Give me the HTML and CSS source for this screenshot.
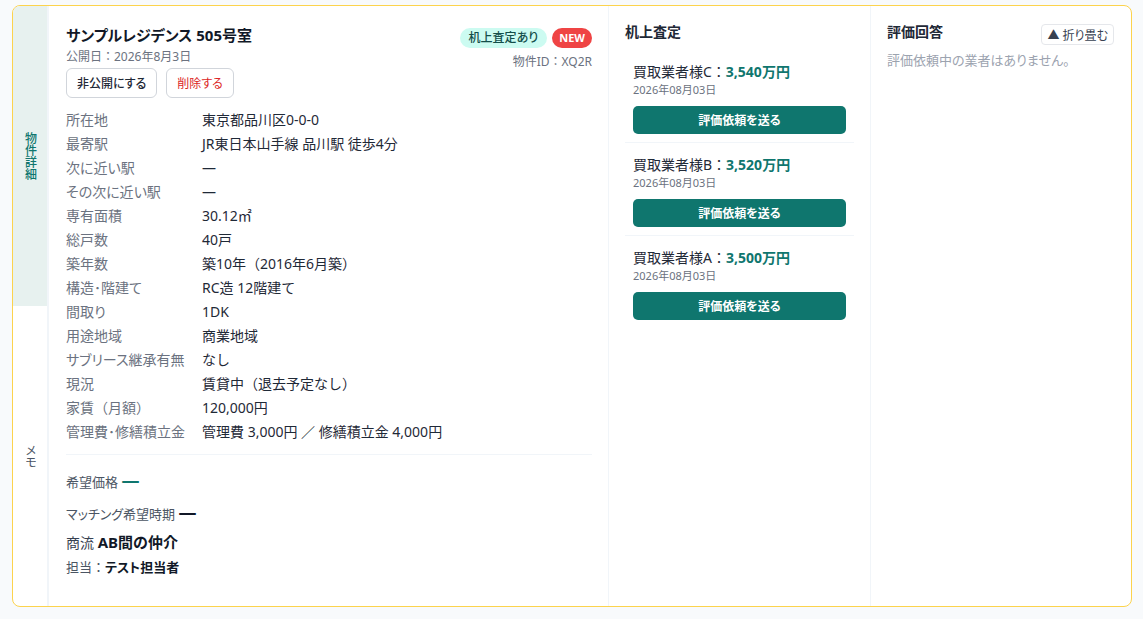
FILE: index.html
```html
<!DOCTYPE html>
<html lang="ja">
<head>
  <meta charset="UTF-8" />
  <meta name="viewport" content="width=device-width, initial-scale=1.0"/>
  <title>物件詳細</title>
  <link rel="stylesheet" href="styles.css">
</head>
<body>
  <div class="card">
    <div class="tabs">
      <div class="tab active">物件詳細</div>
      <div class="tab">メモ</div>
    </div>

    <div class="main">
      <div class="head">
        <div>
          <h1 class="title">サンプルレジデンス 505号室</h1>
          <div class="published">公開日：2026年8月3日</div>
          <div class="actions">
            <button class="btn">非公開にする</button>
            <button class="btn danger">削除する</button>
          </div>
        </div>
        <div class="head-right">
          <div class="badges">
            <span class="badge desk">机上査定あり</span>
            <span class="badge new">NEW</span>
          </div>
          <div class="prop-id">物件ID：XQ2R</div>
        </div>
      </div>

      <dl class="spec">
        <dt>所在地</dt><dd>東京都品川区0-0-0</dd>
        <dt>最寄駅</dt><dd>JR東日本山手線 品川駅 徒歩4分</dd>
        <dt>次に近い駅</dt><dd>—</dd>
        <dt>その次に近い駅</dt><dd>—</dd>
        <dt>専有面積</dt><dd>30.12㎡</dd>
        <dt>総戸数</dt><dd>40戸</dd>
        <dt>築年数</dt><dd>築10年（2016年6月築）</dd>
        <dt>構造･階建て</dt><dd>RC造 12階建て</dd>
        <dt>間取り</dt><dd>1DK</dd>
        <dt>用途地域</dt><dd>商業地域</dd>
        <dt>サブリース継承有無</dt><dd>なし</dd>
        <dt>現況</dt><dd>賃貸中（退去予定なし）</dd>
        <dt class="full">家賃（月額）</dt><dd>120,000円</dd>
        <dt>管理費･修繕積立金</dt><dd>管理費 3,000円 ／ 修繕積立金 4,000円</dd>
      </dl>

      <div class="extra">
        <div class="wish">希望価格 <span class="dash teal">—</span></div>
        <div class="wish">マッチング希望時期 <span class="dash">—</span></div>
        <div class="flow">商流 <strong>AB間の仲介</strong></div>
        <div class="owner">担当：<strong>テスト担当者</strong></div>
      </div>
    </div>

    <div class="col">
      <h2 class="col-title">机上査定</h2>
      <ul class="offers">
        <li>
          <div class="offer-name">買取業者様C：<span class="price">3,540万円</span></div>
          <div class="offer-date">2026年08月03日</div>
          <button class="send">評価依頼を送る</button>
        </li>
        <li>
          <div class="offer-name">買取業者様B：<span class="price">3,520万円</span></div>
          <div class="offer-date">2026年08月03日</div>
          <button class="send">評価依頼を送る</button>
        </li>
        <li>
          <div class="offer-name">買取業者様A：<span class="price">3,500万円</span></div>
          <div class="offer-date">2026年08月03日</div>
          <button class="send">評価依頼を送る</button>
        </li>
      </ul>
    </div>

    <div class="col last">
      <div class="col-head">
        <h2 class="col-title">評価回答</h2>
        <button class="fold">▲ 折り畳む</button>
      </div>
      <p class="empty">評価依頼中の業者はありません。</p>
    </div>
  </div>
</body>
</html>
```

FILE: styles.css
```css
* {
  box-sizing: border-box;
}
body {
  margin: 0;
  padding: 5px 11px 12px 12px;
  background: #f8fafc;
  font-family: "Noto Sans", "Noto Sans CJK JP", sans-serif;
  color: #1f2937;
}
button {
  font-family: inherit;
  cursor: pointer;
}
/* proportional kana, only where no full-width colon/paren is shown */
.title,
.btn,
.badge,
.spec dt,
.wish,
.owner strong,
.fold,
.send,
.empty {
  font-feature-settings: "palt";
}
.spec dt.full {
  font-feature-settings: normal;
}
.card {
  display: flex;
  width: 1120px;
  height: 602px;
  background: #fff;
  border: 1px solid #fcd34d;
  border-radius: 8px;
  overflow: hidden;
}

.tabs {
  display: flex;
  flex-direction: column;
  width: 36px;
  flex-shrink: 0;
  border-right: 2px solid #f1f5f9;
}
.tab {
  flex: 1;
  display: flex;
  align-items: center;
  justify-content: center;
  writing-mode: vertical-rl;
  font-size: 12px;
  color: #4b5563;
}
.tab.active {
  background: #e7f1ef;
  color: #0f766e;
  font-weight: 500;
}

.main {
  width: 560px;
  flex-shrink: 0;
  padding: 18px 16px 0 17px;
  border-right: 1px solid #f1f5f9;
}
.head {
  display: flex;
  justify-content: space-between;
}
.title {
  margin: 0;
  font-size: 15px;
  font-weight: 700;
  line-height: 22px;
  color: #111827;
}
.published {
  font-size: 12px;
  color: #6b7280;
  line-height: 16px;
  margin-top: 3px;
}
.actions {
  display: flex;
  gap: 9px;
  margin-top: 3px;
}
.btn {
  height: 30px;
  padding: 0 10px;
  font-size: 12px;
  font-weight: 500;
  background: #fff;
  border: 1px solid #d1d5db;
  border-radius: 6px;
  color: #1f2937;
}
.btn.danger {
  color: #dc2626;
  font-weight: 400;
}
.head-right {
  display: flex;
  flex-direction: column;
  align-items: flex-end;
  padding-top: 4px;
}
.badges {
  display: flex;
  gap: 5px;
}
.badge {
  height: 20px;
  line-height: 20px;
  padding: 0 9px;
  border-radius: 10px;
  font-size: 12px;
  font-weight: 500;
}
.badge.desk {
  background: #ccfbf1;
  color: #134e4a;
}
.badge.new {
  background: #ef4444;
  color: #fff;
  font-weight: 700;
  font-size: 11px;
  padding: 0 7px;
}
.prop-id {
  font-size: 12px;
  color: #6b7280;
  margin-top: 4px;
}

.spec {
  display: grid;
  grid-template-columns: 136px 1fr;
  margin: 10px 0 0;
  font-size: 14px;
  line-height: 24px;
}
.spec dt {
  color: #6b7280;
}
.spec dd {
  margin: 0;
  color: #1f2937;
}

.extra {
  margin-top: 10px;
  padding-top: 16px;
  border-top: 1px solid #f1f5f9;
}
.wish {
  font-size: 13px;
  color: #4b5563;
  line-height: 22px;
  margin-bottom: 10px;
}
.dash {
  font-size: 18px;
  line-height: 18px;
  color: #111827;
  font-weight: 700;
}
.dash.teal {
  color: #0f766e;
}
.flow {
  font-size: 14px;
  color: #374151;
  line-height: 22px;
  margin-top: -4px;
}
.flow strong {
  font-size: 15px;
  color: #111827;
}
.owner {
  font-size: 13px;
  color: #4b5563;
  line-height: 22px;
  margin-top: 2px;
}
.owner strong {
  color: #111827;
}

.col {
  width: 262px;
  flex-shrink: 0;
  padding: 15px 16px;
  border-right: 1px solid #f1f5f9;
}
.col.last {
  flex: 1;
  border-right: none;
}
.col-title {
  margin: 0;
  font-size: 14px;
  font-weight: 600;
  line-height: 22px;
  color: #1f2937;
}
.col-head {
  display: flex;
  justify-content: space-between;
  align-items: flex-start;
}
.fold {
  height: 21px;
  padding: 0 5px;
  font-size: 12px;
  color: #374151;
  background: #fff;
  border: 1px solid #e5e7eb;
  border-radius: 4px;
  margin-top: 3px;
  margin-right: 1px;
}
.empty {
  margin: 5px 0 0;
  font-size: 13px;
  color: #9ca3af;
}

.offers {
  list-style: none;
  margin: 7px 0 0;
  padding: 0;
}
.offers li {
  padding: 12px 8px 8px;
  border-bottom: 1px solid #f1f5f9;
}
.offers li:last-child {
  border-bottom: none;
}
.offer-name {
  font-size: 14px;
  line-height: 20px;
  color: #1f2937;
}
.price {
  color: #0f766e;
  font-weight: 700;
}
.offer-date {
  font-size: 11px;
  color: #6b7280;
  line-height: 16px;
}
.send {
  display: block;
  width: 100%;
  height: 28px;
  margin-top: 8px;
  border: none;
  border-radius: 5px;
  background: #0f766e;
  color: #fff;
  font-size: 12px;
  font-weight: 700;
}
```
